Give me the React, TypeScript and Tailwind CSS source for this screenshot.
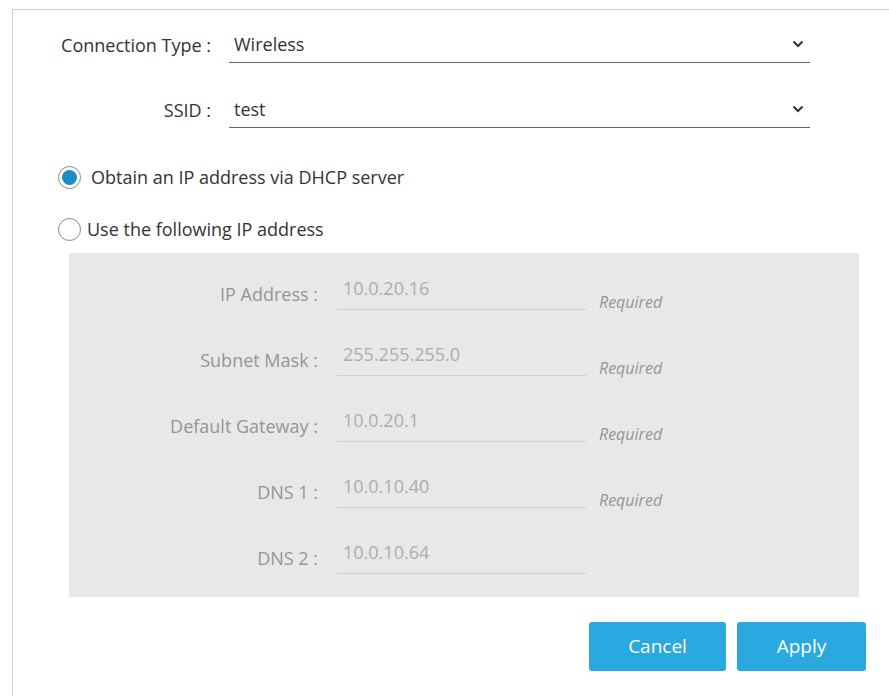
import { useState } from 'react';

const font = { fontFamily: '"Open Sans", "Noto Sans", sans-serif' };

function Chevron() {
  return (
    <svg width="12" height="8" viewBox="0 0 12 8" className="shrink-0">
      <path d="M1.5 1.5 L6 6 L10.5 1.5" fill="none" stroke="#333" strokeWidth="2" />
    </svg>
  );
}

function SelectRow({ label, value }: { label: string; value: string }) {
  return (
    <div className="flex items-center">
      <div className="w-[198px] text-right text-[18px] leading-[24px] text-[#333]">{label}</div>
      <div className="ml-[18px] w-[581px] h-[37px] flex items-center justify-between pl-[5px] pr-[6px] border-b border-[#666] text-[18px] leading-[24px] text-[#333]">
        <span>{value}</span>
        <Chevron />
      </div>
    </div>
  );
}

function Radio({ checked, label, gap, onClick }: { checked: boolean; label: string; gap: string; onClick: () => void }) {
  return (
    <div className="flex items-center h-[24px] cursor-pointer" onClick={onClick}>
      <span className="w-[23px] h-[23px] rounded-full border border-[#8a8a8a] bg-white flex items-center justify-center">
        {checked && <span className="w-[15px] h-[15px] rounded-full bg-[#1d8bc6]" />}
      </span>
      <span className={`${gap} text-[18px] leading-[24px] text-[#333]`}>{label}</span>
    </div>
  );
}

const fields = [
  { label: 'IP Address :', value: '10.0.20.16', required: true },
  { label: 'Subnet Mask :', value: '255.255.255.0', required: true },
  { label: 'Default Gateway :', value: '10.0.20.1', required: true },
  { label: 'DNS 1 :', value: '10.0.10.40', required: true },
  { label: 'DNS 2 :', value: '10.0.10.64', required: false },
];

export default function App() {
  const [mode, setMode] = useState<'dhcp' | 'static'>('dhcp');

  return (
    <div className="w-[889px] h-[696px] bg-white overflow-hidden" style={font}>
      <div className="ml-[12px] mt-[9px] border-l border-t border-[#cccccc] h-[700px]">
        <div className="pt-[16px] flex flex-col gap-[28px]">
          <SelectRow label="Connection Type :" value="Wireless" />
          <SelectRow label="SSID :" value="test" />
        </div>

        <div className="mt-[37px] ml-[45px] flex flex-col gap-[28px]">
          <Radio checked={mode === 'dhcp'} label="Obtain an IP address via DHCP server" gap="ml-[10px]" onClick={() => setMode('dhcp')} />
          <Radio checked={mode === 'static'} label="Use the following IP address" gap="ml-[6px]" onClick={() => setMode('static')} />
        </div>

        <div className="mt-[12px] ml-[56px] w-[790px] h-[344px] bg-[#e8e8e8] pt-[8px] flex flex-col">
          {fields.map((f) => (
            <div key={f.label} className="flex items-start h-[66px]">
              <div className="w-[249px] mt-[21px] text-right text-[18px] leading-[24px] text-[#959595]">{f.label}</div>
              <div className="ml-[19px] w-[249px] h-[49px] border-b border-[#cfcfcf] pt-[15px] pl-[6px] text-[18px] leading-[24px] text-[#adadad]">
                {f.value}
              </div>
              {f.required && (
                <div className="ml-[13px] mt-[29px] text-[16px] leading-[24px] italic text-[#969696]">Required</div>
              )}
            </div>
          ))}
        </div>

        <div className="mt-[25px] flex justify-end gap-[11px] pr-[23px]">
          <button className="w-[137px] h-[49px] rounded-[3px] bg-[#29a9e0] text-white text-[19px]">Cancel</button>
          <button className="w-[129px] h-[49px] rounded-[3px] bg-[#29a9e0] text-white text-[19px]">Apply</button>
        </div>
      </div>
    </div>
  );
}
